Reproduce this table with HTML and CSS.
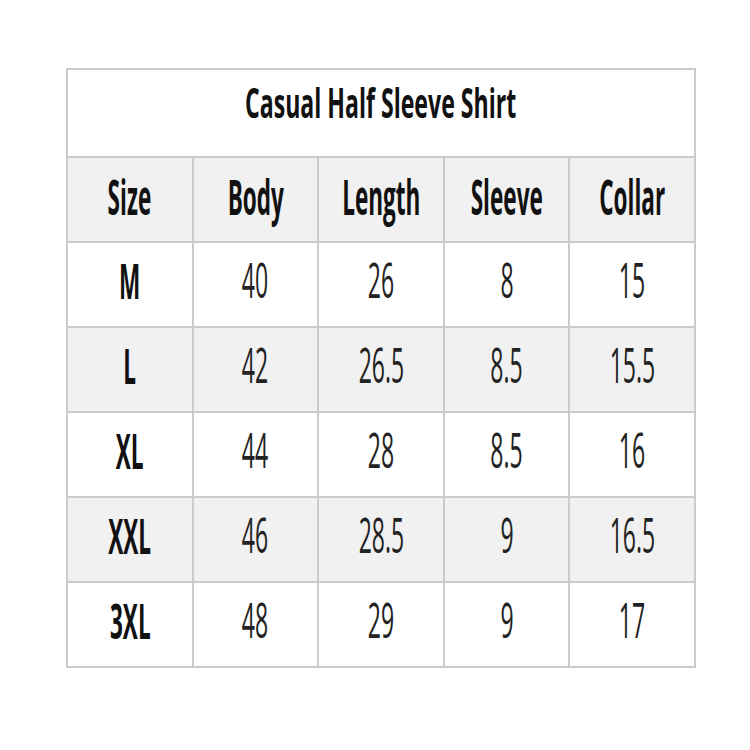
FILE: index.html
```html
<!DOCTYPE html>
<html lang="en">
<head>
<meta charset="utf-8">
<title>Casual Half Sleeve Shirt</title>
<link rel="stylesheet" href="styles.css">
</head>
<body>
<main class="page">
  <div class="chart">
    <div class="cell title"><span class="txt">Casual Half Sleeve Shirt</span></div>

    <div class="cell head shade"><span class="txt">Size</span></div>
    <div class="cell head shade"><span class="txt">Body</span></div>
    <div class="cell head shade"><span class="txt">Length</span></div>
    <div class="cell head shade"><span class="txt">Sleeve</span></div>
    <div class="cell head shade"><span class="txt">Collar</span></div>

    <div class="cell label"><span class="txt">M</span></div>
    <div class="cell num"><span class="txt">40</span></div>
    <div class="cell num"><span class="txt">26</span></div>
    <div class="cell num"><span class="txt">8</span></div>
    <div class="cell num"><span class="txt">15</span></div>

    <div class="cell label shade"><span class="txt">L</span></div>
    <div class="cell num shade"><span class="txt">42</span></div>
    <div class="cell num shade"><span class="txt">26.5</span></div>
    <div class="cell num shade"><span class="txt">8.5</span></div>
    <div class="cell num shade"><span class="txt">15.5</span></div>

    <div class="cell label"><span class="txt">XL</span></div>
    <div class="cell num"><span class="txt">44</span></div>
    <div class="cell num"><span class="txt">28</span></div>
    <div class="cell num"><span class="txt">8.5</span></div>
    <div class="cell num"><span class="txt">16</span></div>

    <div class="cell label shade"><span class="txt">XXL</span></div>
    <div class="cell num shade"><span class="txt">46</span></div>
    <div class="cell num shade"><span class="txt">28.5</span></div>
    <div class="cell num shade"><span class="txt">9</span></div>
    <div class="cell num shade"><span class="txt">16.5</span></div>

    <div class="cell label"><span class="txt">3XL</span></div>
    <div class="cell num"><span class="txt">48</span></div>
    <div class="cell num"><span class="txt">29</span></div>
    <div class="cell num"><span class="txt">9</span></div>
    <div class="cell num"><span class="txt">17</span></div>
  </div>
</main>
</body>
</html>
```
FILE: styles.css
```css
html, body {
  margin: 0;
  padding: 0;
  background: #ffffff;
}

.page {
  padding: 68px 0 0 66px;
}

.chart {
  width: 626px;
  display: grid;
  grid-template-columns: repeat(5, 1fr);
  grid-template-rows: 86px repeat(6, 83px);
  gap: 2px;
  padding: 2px;
  background: #cbcbcb;
  font-family: "Open Sans", "DejaVu Sans", sans-serif;
  color: #111111;
}

.cell {
  background: #ffffff;
  display: flex;
  align-items: center;
  justify-content: center;
  overflow: hidden;
}

.shade {
  background: #f1f1f1;
}

.txt {
  display: inline-block;
  line-height: 1;
  white-space: nowrap;
  transform: scaleX(0.47);
  transform-origin: center;
}

.title {
  grid-column: 1 / -1;
  padding-bottom: 22px;
  font-size: 42px;
  font-weight: 700;
}

.title .txt {
  transform: scaleX(0.55);
}

.head {
  padding-bottom: 6px;
  font-size: 48px;
  font-weight: 700;
}

.label {
  padding-bottom: 8px;
  font-size: 48px;
  font-weight: 700;
}

.num {
  padding-bottom: 10px;
  font-size: 49px;
  font-weight: 400;
  color: #222222;
}
```
